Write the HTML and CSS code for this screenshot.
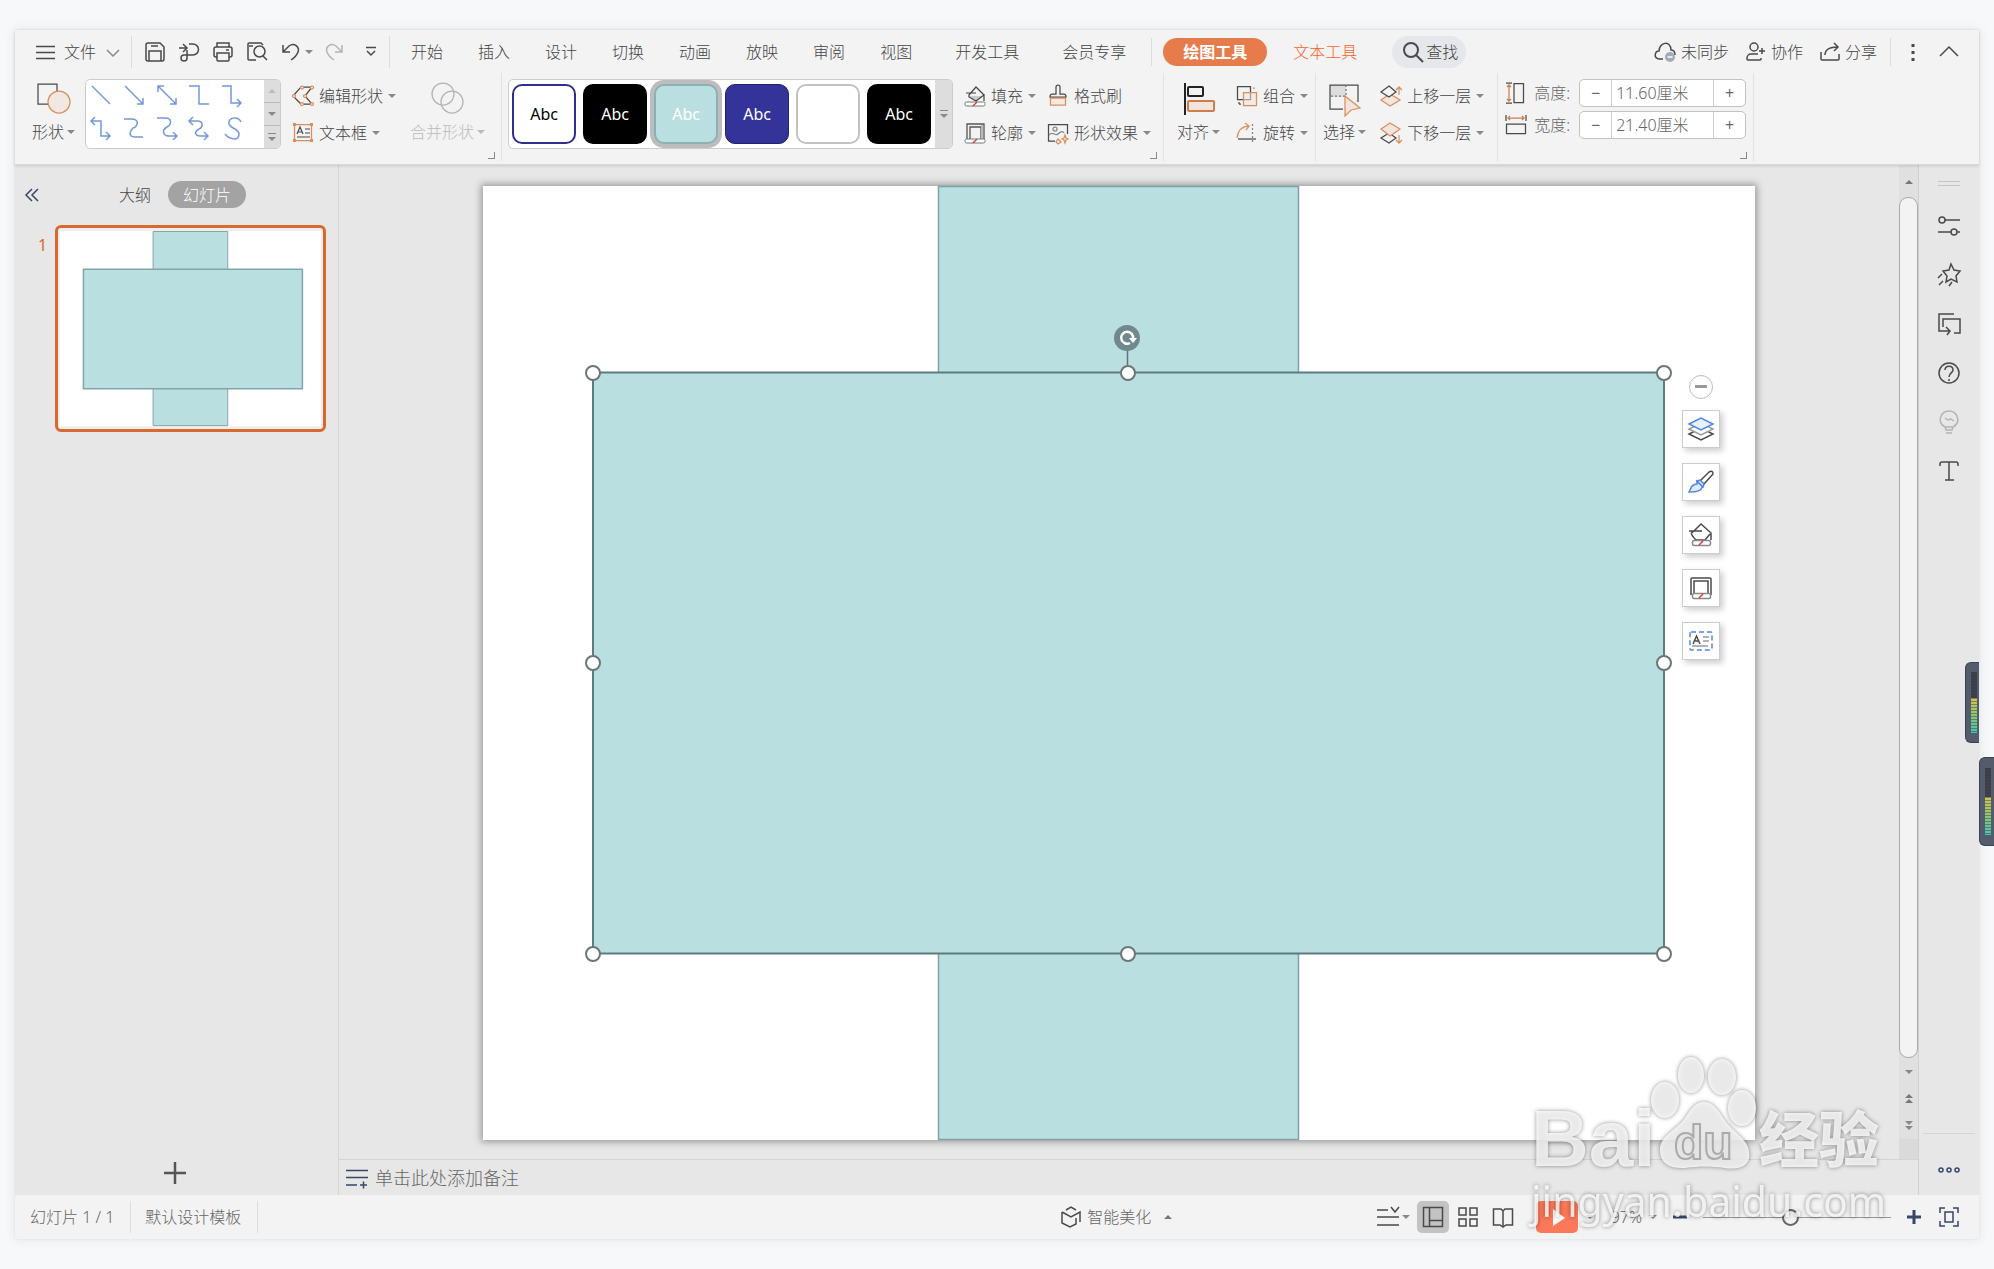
FILE: index.html
```html
<!DOCTYPE html>
<html lang="zh-CN">
<head>
<meta charset="utf-8">
<title>演示文稿</title>
<link rel="stylesheet" href="styles.css">
</head>
<body>
<svg class="sprite" aria-hidden="true">
  <symbol id="fill" viewBox="0 0 22 22"><path d="M5 11h13l-6 5z" fill="#ccc" stroke="none"/><path d="M5 10 12 2l8 8-8 6-7-4zM2 8h10M20 9v7" fill="none" stroke="#444" stroke-width="1.2"/><rect x="1" y="17" width="20" height="4" rx="1.5" fill="#fff" stroke="#777" stroke-width="1"/><path d="m9 21 4-4" stroke="#d33"/></symbol>
  <symbol id="outline" viewBox="0 0 22 22"><path d="M3 18V2h17v16M6 17V5h11v12" fill="none" stroke="#555" stroke-width="1.3"/><path d="M18 3v14" stroke="#bbb" stroke-width="2"/><rect x="1" y="17" width="20" height="4" rx="1.5" fill="#fff" stroke="#777" stroke-width="1"/><path d="m9 21 4-4" stroke="#d33"/></symbol>
</svg>
<main class="window">
  <header class="top">
    <nav class="tabbar">
      <button class="file"><svg class="i20" viewBox="0 0 20 20"><path d="M0 4.500h19M0 10.500h19M0 16.500h19"/></svg>文件<svg class="i14" viewBox="0 0 14 14"><path d="m1 5 6 6 6-6" stroke="#888"/></svg></button>
      <i class="rule"></i>
      <div class="quick">
        <button aria-label="保存"><svg class="i22" viewBox="0 0 22 22"><path d="M2 4a2 2 0 0 1 2-2h12l4 4v12a2 2 0 0 1-2 2H4a2 2 0 0 1-2-2zM5 20v-10h12v10M7 5h7"/></svg></button>
        <button aria-label="输出"><svg class="i22" viewBox="0 0 22 22"><path d="M1 7h7M5 3l4 4-4 4M11 3h4a5.500 5.500 0 0 1 0 11H6a3 3 0 1 0 3 3V9"/></svg></button>
        <button aria-label="打印"><svg class="i22" viewBox="0 0 22 22"><path d="M5 6V2h12v4M5 16H4a2 2 0 0 1-2-2V8a2 2 0 0 1 2-2h14a2 2 0 0 1 2 2v6a2 2 0 0 1-2 2h-1M5 12h12v7a1 1 0 0 1-1 1H6a1 1 0 0 1-1-1zM14 9h3"/></svg></button>
        <button aria-label="打印预览"><svg class="i22" viewBox="0 0 22 22"><path d="M10 19H3a1 1 0 0 1-1-1V3a1 1 0 0 1 1-1h12l2 2M3 5h4M17 15l4 4"/><circle cx="13.500" cy="10.500" r="5.500"/></svg></button>
        <button class="undo" aria-label="撤销"><svg class="i22" viewBox="0 0 22 22"><path d="M3 4v7h7M3 11l6-6c5-4 11 1 9 6-1 3-4 6-7 8"/></svg><i class="arrow"></i></button>
        <button aria-label="恢复"><svg class="i22 off" viewBox="0 0 22 22"><path d="M18 4v7h-7M18 11l-6-6C7 1 1 6 3 11c1 3 4 6 7 8"/></svg></button>
        <button aria-label="自定义"><svg class="i12" viewBox="0 0 12 12"><path d="M1 1.500h10M2 5l4 4 4-4"/></svg></button>
      </div>
      <i class="rule"></i>
      <div class="tabs"><button>开始</button><button>插入</button><button>设计</button><button>切换</button><button>动画</button><button>放映</button><button>审阅</button><button>视图</button></div>
      <div class="tabs wide"><button>开发工具</button><button>会员专享</button></div>
      <i class="rule short"></i>
      <button class="pill">绘图工具</button>
      <button class="texttool">文本工具</button>
      <button class="find"><svg class="i22" viewBox="0 0 22 22"><circle cx="9" cy="9" r="7" stroke-width="2"/><path d="m14 14 7 7" stroke-width="2"/></svg>查找</button>
      <div class="account">
        <button><svg class="i24" viewBox="0 0 24 24"><path d="M10 19H6c-6-1-4-8 0-8C6 2 18 0 18 10c4 0 4 3 4 5"/><circle cx="17" cy="17" r="5" fill="#a1a9bb" stroke="none"/><path d="M14.500 17h5" stroke="#fff"/></svg>未同步</button>
        <button><svg class="i22" viewBox="0 0 22 22"><circle cx="9" cy="6" r="4"/><path d="M13 13H6a4 4 0 0 0-4 4v1a1 1 0 0 0 1 1h12a1 1 0 0 0 1-1v-1M14 10h6M17 7v6"/></svg>协作</button>
        <button><svg class="i22" viewBox="0 0 22 22"><path d="M2 11v7a1 1 0 0 0 1 1h16a1 1 0 0 0 1-1v-5M6 14c0-6 5-8 13-8M15 2l4 4-4 4"/></svg>分享</button>
      </div>
      <i class="rule short"></i>
      <button class="more" aria-label="更多"><svg class="i20" viewBox="0 0 20 20"><path d="M10 2v3M10 9v3M10 16v3" stroke-width="3"/></svg></button>
      <button aria-label="折叠功能区"><svg class="i20" viewBox="0 0 20 20"><path d="m1 14 9-9 9 9"/></svg></button>
    </nav>

    <section class="ribbon">
      <div class="group g1">
        <button class="big"><svg class="i36" viewBox="0 0 36 36"><path d="M2 3h19v20H2z"/><circle cx="23" cy="21" r="11" fill="#f2e8e2" stroke="#d9905f"/></svg><span>形状<i class="arrow"></i></span></button>
        <div class="gallery">
          <svg class="lines" viewBox="0 0 178 67"><g><path d="m6 6 18 18"/><path d="m39 6 18 18m0-6v6h-6"/><path d="m72 6 18 18m0-6v6h-6M72 12V6h6"/><path d="M103 6h10v18h10"/><path d="M136 6h9v17h10m-4-4 4 4-4 4"/><path d="M5 41h10v15h9m-4-4 4 4-4 4M9 37l-4 4 4 4"/><path d="M38 39h7c10 0 6 8 2 9-7 8 0 9 2 9h8"/><path d="M71 38h8c8 0 6 7 2 9-7 4-2 9 1 9h9m-4-4 4 4-4 4"/><path d="M103 41h8c8 0 5 7 2 8-7 4-2 7 1 7h8m-4-4 4 4-4 4M107 37l-4 4 4 4"/><path d="M155 42c-3-7-14-4-12 2 1 4 10 5 10 10 0 8-10 5-14 0"/></g></svg>
          <div class="steps"><button aria-label="上"><i class="arrow up off"></i></button><button aria-label="下"><i class="arrow"></i></button><button aria-label="全部"><i class="bar"></i><i class="arrow"></i></button></div>
        </div>
        <div class="stack">
          <button class="cmd"><svg class="i22" viewBox="0 0 22 22"><path d="M9 2h11l-7 9 7 8H9l-8-8z"/><g stroke="#d9905f" fill="#f3f3f3"><circle cx="10" cy="2.500" r="1.500"/><circle cx="20" cy="2.500" r="1.500"/><circle cx="2" cy="11" r="1.500"/><circle cx="13" cy="11" r="1.500"/><circle cx="10" cy="19" r="1.500"/><circle cx="20" cy="19" r="1.500"/></g></svg>编辑形状<i class="arrow"></i></button>
          <button class="cmd"><svg class="i22" viewBox="0 0 22 22"><path d="M2.500 2.500h17v16h-17z" stroke="#d9905f"/><g fill="#d9905f" stroke="none"><path d="M1 1h3v3H1zM18 1h3v3h-3zM1 17h3v3H1zM18 17h3v3h-3z"/></g><path d="m5 12 3-7 3 7M6 10h4M13 7h5M13 11h5M5 15h13" stroke-width="1.200"/></svg>文本框<i class="arrow"></i></button>
        </div>
        <button class="big off merge" disabled><svg class="i36" viewBox="0 0 36 36"><circle cx="13" cy="13" r="11"/><circle cx="22" cy="21" r="11"/></svg><span>合并形状<i class="arrow off"></i></span></button>
        <i class="launcher"></i>
      </div>

      <div class="group g2">
        <div class="gallery styles">
          <button class="s1">Abc</button><button class="s2">Abc</button><button class="s3">Abc</button><button class="s4">Abc</button><button class="s5" aria-label="无"></button><button class="s2">Abc</button>
          <button class="all" aria-label="全部样式"><i class="bar"></i><i class="arrow"></i></button>
        </div>
        <div class="stack">
          <button class="cmd"><svg class="i22"><use href="#fill"/></svg>填充<i class="arrow"></i></button>
          <button class="cmd"><svg class="i22"><use href="#outline"/></svg>轮廓<i class="arrow"></i></button>
        </div>
        <div class="stack">
          <button class="cmd"><svg class="i22" viewBox="0 0 22 22"><path d="M9 9V2a1.500 1.500 0 0 1 4 0v7h4q2 0 2 3H3q0-3 2-3z"/><path d="M3.500 13h15v7h-15z" fill="#f6ebe4" stroke="#d9905f"/></svg>格式刷</button>
          <button class="cmd"><svg class="i22" viewBox="0 0 22 22"><path d="M8 19H1.500V2.500h19V12"/><path d="M2 13c4-5 6 2 9-1s5-3 6-1" stroke="#888"/><circle cx="8" cy="7" r="2" stroke="#888"/><path d="m18 13 1 3 2 1-2 1-1 3-1-3-2-1 2-1zM11 17l3 3-3 2-2-2z" stroke="#d9905f"/></svg>形状效果<i class="arrow"></i></button>
        </div>
        <i class="launcher"></i>
      </div>

      <div class="group g3">
        <button class="big"><svg class="i36" viewBox="0 0 36 36"><path d="M4 2v32" stroke="#222" stroke-width="2"/><rect x="7" y="6" width="15" height="9" rx="1" stroke="#222" stroke-width="2"/><rect x="7" y="20" width="26" height="10" rx="1" fill="#f2e5dd" stroke="#d07d49" stroke-width="2"/></svg><span>对齐<i class="arrow"></i></span></button>
        <div class="stack">
          <button class="cmd"><svg class="i22" viewBox="0 0 22 22"><path d="M1.500 1.500h13v13h-13z"/><path d="M7.500 7.500h13v13h-13z" fill="#f2e5dd88" stroke="#d9905f"/><path d="M3 17v2M5 19h-2"/><path d="M17 3h2" stroke="#d9905f"/></svg>组合<i class="arrow"></i></button>
          <button class="cmd"><svg class="i22" viewBox="0 0 22 22"><path d="M1 16C2 8 6 4 13 4M9 1l4 3-3 4" stroke="#d9905f"/><path d="M2 17h18"/><path d="M16.500 2v20" stroke="#888" stroke-dasharray="2 2"/></svg>旋转<i class="arrow"></i></button>
        </div>
      </div>

      <div class="group g4">
        <button class="big"><svg class="i36" viewBox="0 0 36 36"><path d="M3 4h16v12H3z" fill="#ddd" stroke="none"/><path d="M16 28H3V4h28v17"/><path d="M4 15h15V5" stroke="#777" stroke-dasharray="2 2"/><path d="m18 15 15 12-9 2-6 6z" fill="#f2e5dd" stroke="#d9905f"/></svg><span>选择<i class="arrow"></i></span></button>
        <div class="stack">
          <button class="cmd"><svg class="i22" viewBox="0 0 22 22"><path d="m10 9 10 6-10 6-9-6z" fill="#f2e5dd" stroke="#d9905f"/><path d="m9 1 7 6-7 5-8-5z" fill="#f3f3f3"/><path d="M19 10V2M16 5l3-3 3 3" stroke="#d9905f"/></svg>上移一层<i class="arrow"></i></button>
          <button class="cmd"><svg class="i22" viewBox="0 0 22 22"><path d="m9 11 7 5-7 5-8-5z"/><path d="m10 1 10 6-10 7L1 7z" fill="#f2e5dd" stroke="#d9905f"/><path d="M19 13v8M16 18l3 3 3-3" stroke="#d9905f"/></svg>下移一层<i class="arrow"></i></button>
        </div>
      </div>

      <div class="group g5">
        <div class="size"><svg class="i22" viewBox="0 0 22 22"><path d="M9 1.500h9.500v19H9z"/><path d="M1 1h6M1 21h6"/><path d="M4 3v16M2 5l2-2 2 2M2 17l2 2 2-2" stroke="#d07d49"/></svg><label for="h">高度:</label><div class="spin"><button>−</button><input id="h" value="11.60厘米"><button>+</button></div></div>
        <div class="size"><svg class="i22" viewBox="0 0 22 22"><path d="M1.500 10h19v9.500h-19z"/><path d="M1 1v6M21 1v6"/><path d="M3 4h16M5 2 3 4l2 2M17 2l2 2-2 2" stroke="#d07d49"/></svg><label for="w">宽度:</label><div class="spin"><button>−</button><input id="w" value="21.40厘米"><button>+</button></div></div>
        <i class="launcher"></i>
      </div>
    </section>
  </header>

  <div class="work">
    <aside class="outline">
      <div class="modes">
        <button class="fold" aria-label="收起"><svg class="i16" viewBox="0 0 16 16"><path d="M8 2 2 8l6 6M14 2 8 8l6 6" stroke="#3c4663"/></svg></button>
        <button>大纲</button><button class="on">幻灯片</button>
      </div>
      <div class="slides"><span>1</span>
        <button class="thumb" aria-label="幻灯片 1"><svg viewBox="0 0 262 196"><path d="M0 0h262v196H0z" fill="#fff" stroke="none"/><g fill="#badfe1" stroke="#84a5a7" stroke-width="1"><path d="M93.500.5h75v195h-75z"/><path d="M23.500 38.500h220v120h-220z" stroke-width="1.500"/></g></svg></button>
      </div>
      <button class="add" aria-label="新建幻灯片"><svg class="i24" viewBox="0 0 24 24"><path d="M12 1v22M1 12h22" stroke="#555" stroke-width="2.500"/></svg></button>
    </aside>

    <section class="center">
      <div class="view">
        <div class="canvas">
          <div class="slide">
            <svg class="drawing" viewBox="0 0 1272 954">
              <path d="M455.500.5h360v953h-360z" fill="#badfe1" stroke="#7fa3a5"/>
              <path d="M110 186.500h1071v581H110z" fill="#badfe1" stroke="#5c7c80" stroke-width="2"/>
              <path d="M644.500 164v16" stroke="#607478"/>
              <circle cx="644" cy="152" r="13" fill="#6f898c"/>
              <path d="M647 157a6 6 0 1 1 3-4" fill="none" stroke="#fff" stroke-width="2.500"/><path d="M646 152h8l-4 5z" fill="#fff"/>
              <g fill="#fff" stroke="#6d7677" stroke-width="2"><circle cx="110" cy="187" r="7"/><circle cx="645" cy="187" r="7"/><circle cx="1181" cy="187" r="7"/><circle cx="110" cy="477" r="7"/><circle cx="1181" cy="477" r="7"/><circle cx="110" cy="768" r="7"/><circle cx="645" cy="768" r="7"/><circle cx="1181" cy="768" r="7"/></g>
            </svg>
            <div class="float">
              <button class="min" aria-label="收起工具"><i></i></button>
              <button aria-label="图层"><svg class="i26" viewBox="0 0 26 26"><path d="m1 18 12 6 12-6-12-6z"/><path d="m1 13 12 6 12-6-12-6z" fill="#fff" stroke="#999"/><path d="m1 8 12-6 12 6-12 6z" fill="#e9f0fc" stroke="#4f86e0"/></svg></button>
              <button aria-label="画笔"><svg class="i26" viewBox="0 0 26 26"><path d="m12 12 9-9q4-2 4 2l-9 10z"/><path d="m9 12 6 5c-2 5-6 6-14 6 2-4 3-8 8-8z" fill="#dfeafa" stroke="#4f86e0"/><path d="m9 12 3-1 4 4-1 3z" fill="#dfeafa" stroke="#4f86e0"/></svg></button>
              <button aria-label="填充"><svg class="i26" viewBox="0 0 26 26"><path d="m5 10 8-8 10 9v7M22 12l-5 6H8c-8-8-3-8-3-8M1 9h13"/><rect x="4.500" y="18.500" width="18" height="5" rx="1.500" fill="#fff" stroke="#888"/><path d="m11 23 4-4" stroke="#d33"/></svg></button>
              <button aria-label="轮廓"><svg class="i26" viewBox="0 0 26 26"><path d="M3 20V4q0-1 1-1h18q1 0 1 1v16M6 19V6h14v13"/><rect x="4.500" y="18.500" width="18" height="5" rx="1.500" fill="#fff" stroke="#888"/><path d="m11 23 4-4" stroke="#d33"/></svg></button>
              <button aria-label="文本框"><svg class="i26" viewBox="0 0 26 26"><rect x="2" y="4" width="22" height="18" rx="1" stroke="#4f86e0" stroke-dasharray="5 3"/><path d="m5 16 3.500-8L12 16M6 13h5"/><path d="M15 9h6M15 13h6M4 18h16" stroke="#999"/></svg></button>
            </div>
          </div>
        </div>
        <div class="scroll">
          <button aria-label="向上"><i class="arrow up"></i></button>
          <div class="knob"></div>
          <button aria-label="向下"><i class="arrow"></i></button>
          <button aria-label="上一张"><i class="arrow up"></i><i class="arrow up"></i></button>
          <button aria-label="下一张"><i class="arrow"></i><i class="arrow"></i></button>
          <div class="foot"></div>
        </div>
      </div>
      <div class="notes"><svg class="i22" viewBox="0 0 22 22"><path d="M0 3.500h22M0 10.500h22M0 18h11M14 18h7M17.500 14.500v7" stroke="#39466a"/></svg>单击此处添加备注</div>
    </section>

    <aside class="tools">
      <i class="grip"></i>
      <button aria-label="属性"><svg class="i24" viewBox="0 0 24 24"><circle cx="5" cy="6" r="3"/><circle cx="17" cy="18" r="3"/><path d="M8 6h15M1 18h13M20 18h3"/></svg></button>
      <button aria-label="动画"><svg class="i24" viewBox="0 0 24 24"><path d="m14 1 3 6 6 1-4 5 1 6-6-3-5 3 1-6-4-5 6-1zM5 11l-4 4M6 18l-4 4M15 19l-3 4"/></svg></button>
      <button aria-label="切换"><svg class="i24" viewBox="0 0 24 24"><path d="M17 2H2v17h10M9 15l4 4-3 4M6 15V7h17v14h-6"/></svg></button>
      <button aria-label="帮助"><svg class="i24" viewBox="0 0 24 24"><circle cx="12" cy="12" r="10"/><path d="M8 9c0-5 8-5 8 0 0 3-4 3-4 7M12 18v2"/></svg></button>
      <button class="off" aria-label="提示"><svg class="i24" viewBox="0 0 24 24"><path d="M8 17c-9-5-4-16 4-16s13 11 4 16l-1 3H9zM8 17h8M9 23h6M8 8l3 2 3-1 3 2"/></svg></button>
      <button aria-label="文本"><svg class="i24" viewBox="0 0 24 24"><path d="M3 7V5q0-2 2-2h14q2 0 2 2v2M12 3v18M8 21h9"/></svg></button>
      <div class="last"><button aria-label="更多工具"><svg class="i24" viewBox="0 0 24 24"><g stroke="#39466a"><circle cx="4" cy="12" r="2"/><circle cx="12" cy="12" r="2"/><circle cx="20" cy="12" r="2"/></g></svg></button></div>
    </aside>
  </div>

  <footer class="status">
    <span class="page">幻灯片 1 / 1</span><span class="tpl">默认设计模板</span>
    <button class="beauty"><svg class="i22" viewBox="0 0 22 22"><path d="m6 4 5-3 5 3M2 6v11l8 4 6-3v-6M2 6l9 5 9-5v10"/></svg>智能美化<i class="arrow up"></i></button>
    <div class="views">
      <button class="list" aria-label="备注"><svg class="i24" viewBox="0 0 24 24"><path d="M1 5h11M15 2l4 5 4-5M1 12h22M1 20h22"/></svg><i class="arrow"></i></button>
      <button class="on" aria-label="普通视图"><svg class="i22" viewBox="0 0 22 22"><path d="M1.500 1.500h19v19h-19zM7.500 2v18M8 14.500h12"/></svg></button>
      <button aria-label="浏览"><svg class="i22" viewBox="0 0 22 22"><path d="M2 2h7v7H2zM13 2h7v7h-7zM2 13h7v7H2zM13 13h7v7h-7z"/></svg></button>
      <button aria-label="阅读"><svg class="i22" viewBox="0 0 22 22"><path d="M11 5 9 3H1.500v16H8l3 2 3-2h6.500V3H13l-2 2v15"/></svg></button>
      <button class="play" aria-label="放映"><svg class="i20" viewBox="0 0 20 20"><path d="m6 2 12 9-12 8z" fill="#fff" stroke="none"/></svg></button>
      <i class="arrow"></i>
    </div>
    <button class="zoom">97%<i class="arrow"></i></button>
    <button aria-label="缩小"><svg class="i14" viewBox="0 0 14 14"><path d="M0 7h14" stroke="#39466a" stroke-width="3"/></svg></button>
    <input class="slider" type="range" min="0" max="100" value="46" aria-label="缩放">
    <button aria-label="放大"><svg class="i14" viewBox="0 0 14 14"><path d="M0 7h14M7 0v14" stroke="#39466a" stroke-width="3"/></svg></button>
    <button class="fit" aria-label="适应窗口"><svg class="i20" viewBox="0 0 20 20"><path d="M1 6V1h5M14 1h5v5M19 14v5h-5M6 19H1v-5M6 5h8v10H6z" stroke="#39466a"/></svg></button>
  </footer>
</main>

<div class="meter m1"><i></i></div>
<div class="meter m2"><i></i></div>
<svg class="mark" viewBox="0 0 370 190">
  <g fill="#fff" fill-opacity=".8">
    <text class="logo" x="4" y="113">Bai</text>
    <path d="M177 49c9 0 14 8 20 17 8 13 25 20 25 34 2 14-12 17-24 15-14-2-26-2-40 0-16 1-25-5-25-18 0-15 17-20 25-32 6-9 10-16 19-16z"/>
    <ellipse cx="138" cy="47" rx="14" ry="18"/><ellipse cx="164" cy="22" rx="13" ry="18"/><ellipse cx="195" cy="24" rx="14" ry="18"/><ellipse cx="215" cy="55" rx="14" ry="18"/>
    <text class="du" x="147" y="106">du</text>
    <text class="cn" x="232" y="109">经验</text>
    <text class="url" x="4" y="164">jingyan.baidu.com</text>
  </g>
</svg>
</body>
</html>
```
FILE: styles.css
```css
* { box-sizing: border-box; }
body { margin: 0; min-height: 100vh; display: flex; padding: 30px 15px; background: #f7f8fa; color: #444; font: 300 16px/20px "Noto Sans", "Noto Sans CJK SC", sans-serif; position: relative; overflow-x: hidden; }
button { border: 0; padding: 0; margin: 0; background: none; color: inherit; font: inherit; display: flex; align-items: center; justify-content: center; white-space: nowrap; flex: none; }
input { font: inherit; color: inherit; }
svg { flex: none; display: block; fill: none; stroke: #4a4a4a; stroke-width: 1.5; overflow: visible; }
.sprite { position: absolute; width: 0; height: 0; }
.i12 { width: 12px; height: 12px; } .i14 { width: 14px; height: 14px; } .i16 { width: 16px; height: 16px; }
.i20 { width: 20px; height: 20px; } .i22 { width: 22px; height: 22px; } .i24 { width: 24px; height: 24px; }
.i26 { width: 26px; height: 26px; } .i36 { width: 36px; height: 36px; }
.off { color: #bbb; } svg.off, .off svg { stroke: #b4b4b4; }
.arrow { flex: none; border: solid transparent; border-width: 4px 4px 0; border-top-color: #888; width: 8px; height: 4px; }
.arrow.off { border-top-color: #bbb; }
.arrow.up { border-width: 0 4px 4px; border-bottom-color: #777; }
.arrow.up.off { border-bottom-color: #bbb; }
.bar { width: 8px; height: 1px; background: #888; }
.rule { flex: none; width: 1px; height: 32px; background: #ddd; }
.rule.short { height: 28px; }

.window { flex: 1; min-width: 0; display: flex; flex-direction: column; background: #e7e7e7; box-shadow: 0 0 10px #dfe2e3, 0 0 1px #ccc; }
.top { background: #f3f3f3; border-bottom: 1px solid #d9d9d9; box-shadow: 0 1px 3px #0002; z-index: 1; }
.tabbar { height: 43px; display: flex; align-items: center; padding: 0 20px 0 21px; }
.file { gap: 8px; margin-right: 11px; }
.file .i14 { margin-left: 2px; }
.quick { display: flex; gap: 12px; padding: 0 12px; }
.quick .undo { gap: 3px; margin-right: -1px; }
.quick button:last-child { margin-left: 7px; }
.tabs { display: flex; gap: 35px; margin-left: 21px; }
.tabs.wide { gap: 43px; margin: 0 25px 0 43px; }
.pill { height: 28px; padding: 0 20px; border-radius: 14px; background: #e67b4b; color: #fff; font-weight: 700; margin: 0 26px 0 11px; }
.texttool { color: #f4652c; }
.find { height: 32px; border-radius: 16px; background: #e5e7ea; padding: 0 8px 0 10px; margin-left: 35px; gap: 2px; }
.account { margin-left: auto; display: flex; gap: 16px; margin-right: 13px; }
.account button { gap: 4px; }
.more { margin: 0 16px 0 12px; }

.ribbon { display: flex; height: 91px; }
.ribbon svg { stroke-width: 1.25; }
.group { position: relative; display: flex; padding-top: 4px; border-right: 1px solid #e2e2e2; height: 88px; }
.g1 { padding-left: 17px; padding-right: 16px; }
.g2 { padding-left: 6px; padding-right: 12px; }
.g3 { padding-left: 13px; padding-right: 7px; }
.g4 { padding-left: 7px; padding-right: 13px; }
.g5 { padding: 6px 7px 0; flex-direction: column; gap: 4px; }
.launcher { position: absolute; right: 6px; bottom: 2px; width: 7px; height: 7px; border: solid #888; border-width: 0 1px 1px 0; }
.big { flex-direction: column; justify-content: flex-start; padding-top: 4px; gap: 5px; }
.big span { display: flex; align-items: center; gap: 3px; }
.merge { margin-left: 14px; }
.stack { display: flex; flex-direction: column; margin-left: 11px; }
.g3 .stack { margin-left: 16px; }
.g4 .stack { margin-left: 14px; }
.cmd { height: 37px; gap: 5px; justify-content: flex-start; }
.gallery { display: flex; height: 70px; background: #fff; border: 1px solid #ccc; border-radius: 5px; overflow: hidden; margin: 2px 0 0 10px; }
.gallery .lines { width: 178px; height: 67px; stroke-width: 1.5; }
.lines g { stroke: #7398dc; }
.steps { display: flex; flex-direction: column; background: #ddd; width: 16px; }
.steps button { flex: 1; flex-direction: column; gap: 3px; border-bottom: 1px solid #bbb; }
.steps button:last-child { border: 0; }
.styles { margin-left: 0; padding-left: 3px; align-items: center; gap: 7px; }
.styles button { width: 64px; height: 60px; border-radius: 10px; color: #fff; font: 16px/20px "Noto Sans", sans-serif; }
.styles .s1 { border: 2px solid #2e2e8c; color: #000; }
.styles .s2 { background: #000; }
.styles .s3 { background: #badfe1; border: 2px solid #8fb0b3; box-shadow: 0 0 0 4px #bdbdbd; }
.styles .s4 { background: #333399; border: 1px solid #22226d; }
.styles .s5 { border: 2px solid #c2c2c2; }
.styles .all { width: 17px; height: 70px; border-radius: 0; background: #ddd; flex-direction: column; gap: 3px; margin-left: -3px; }
.size { display: flex; align-items: center; gap: 7px; height: 28px; }
.size label { width: 38px; color: #666; }
.spin { display: flex; height: 28px; width: 167px; border: 1px solid #c2c2c2; border-radius: 5px; background: #fff; overflow: hidden; color: #666; }
.spin button { width: 31px; font-weight: 400; }
.spin input { flex: 1; min-width: 0; border: solid #ccc; border-width: 0 1px; padding: 0 4px; outline: 0; }

.work { flex: 1; display: flex; min-height: 0; }
.outline { width: 324px; border-right: 1px solid #d6d6d6; display: flex; flex-direction: column; padding: 16px 12px 10px 9px; }
.modes { display: flex; align-items: center; }
.modes .fold { margin-right: 79px; }
.modes .on { height: 27px; padding: 0 15px; margin-left: 17px; border-radius: 14px; background: #a3a3a3; color: #fff; }
.slides { display: flex; margin-top: 17px; gap: 8px; padding-left: 14px; color: #d86a2b; }
.slides span { padding-top: 10px; font-weight: 400; }
.thumb { flex: 1; padding: 3px 2px; border: 3px solid #d9692c; border-radius: 6px; background: #eee; }
.thumb svg { width: 100%; }
.add { margin: auto auto 0 139px; }
.center { flex: 1; min-width: 0; display: flex; flex-direction: column; }
.view { flex: 1; display: flex; min-height: 0; }
.canvas { flex: 1; padding: 21px 144px 19px; }
.slide { position: relative; background: #fff; box-shadow: 0 0 7px 2px #999; }
.drawing { width: 100%; stroke: none; }
.float { position: absolute; left: 94.3%; top: 20.5%; display: flex; flex-direction: column; align-items: center; gap: 15px; }
.float button { width: 38px; height: 38px; background: #fff; border: 1px solid #ccc; box-shadow: 3px 3px 6px #0003; }
.float .min { width: 24px; height: 24px; border: 1px solid #bbb; border-radius: 50%; box-shadow: none; margin: -7px 0 -4px; }
.min i { width: 12px; height: 3px; background: #999; }
.scroll { width: 19px; background: #e0e0e0; display: flex; flex-direction: column; }
.scroll button { height: 27px; flex-direction: column; gap: 1px; }
.scroll button:first-child { height: 32px; padding-top: 2px; }
.knob { flex: 1; border: 1px solid #aaa; border-radius: 9px; background: #f3f3f3; }
.scroll .foot { height: 20px; background: #dadada; }
.notes { height: 36px; border-top: 1px solid #d4d4d4; display: flex; align-items: center; padding-left: 7px; gap: 7px; font-size: 18px; color: #666; }
.tools { width: 61px; border-left: 1px solid #d0d0d0; display: flex; flex-direction: column; align-items: center; padding-top: 16px; gap: 25px; }
.grip { width: 22px; height: 5px; border: solid #c4c4c4; border-width: 1px 0; margin-bottom: 3px; }
.last { margin-top: auto; border-top: 1px solid #d4d4d4; width: 52px; padding: 24px 14px 13px; }

.status { height: 44px; background: #f3f3f3; display: flex; align-items: center; padding: 0 20px 0 15px; color: #666; }
.page, .tpl { height: 32px; line-height: 32px; padding-right: 16px; border-right: 1px solid #ddd; }
.tpl { padding-left: 14px; }
.beauty { gap: 5px; margin-left: 802px; }
.beauty .arrow { margin-left: 8px; }
.views { display: flex; align-items: center; gap: 3px; margin-left: auto; }
.views button { height: 32px; width: 32px; border-radius: 5px; }
.views .list { gap: 2px; width: 34px; margin-right: 4px; }
.views .on { background: #c3c3c3; }
.views .play { background: #fb7858; width: 42px; margin: 0 5px 0 14px; }
.zoom { gap: 7px; margin: 0 16px 0 17px; }
.slider { appearance: none; width: 188px; height: 18px; margin: 0 16px; background: linear-gradient(#999, #999) center / 100% 1px no-repeat; }
.slider::-webkit-slider-thumb { appearance: none; width: 17px; height: 17px; border: 2px solid #666; border-radius: 50%; background: #f3f3f3; }
.fit { margin-left: 18px; }

.meter { position: absolute; z-index: 2; background: #545b6b; border: 1px solid #3d4250; border-right: 0; border-radius: 6px 0 0 6px; }
.meter i { display: block; height: 100%; background: repeating-linear-gradient(#0000 0 2px, #42475588 2px 3px), linear-gradient(#3a3e48 0 43%, #d6c34c 43%, #9bc765 65%, #3fc5b3); }
.m1 { right: 15px; top: 662px; width: 14px; height: 81px; padding: 9px 2px 9px 5px; }
.m2 { right: 0; top: 757px; width: 15px; height: 89px; padding: 10px 3px 10px 5px; }
.mark { position: absolute; z-index: 3; right: 97px; bottom: 26px; width: 370px; height: 190px; stroke: none; pointer-events: none; filter: drop-shadow(0 0 2px #0008); }
.logo { font: 700 80px "Liberation Sans", sans-serif; }
.du { font: 700 48px "Liberation Sans", sans-serif; fill: #e4e4e4; stroke: #aaa; stroke-width: 2; }
.cn { font: 900 60px "Noto Sans CJK SC", sans-serif; }
.url { font: 400 41px "Noto Sans", sans-serif; }
```
